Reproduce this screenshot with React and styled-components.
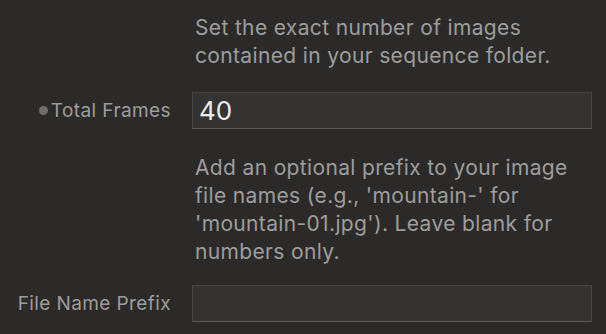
import React from "react";
import styled, { createGlobalStyle } from "styled-components";

const Global = createGlobalStyle`
  html, body { margin: 0; padding: 0; background: #2b2a29; }
  body { font-family: Inter, "Noto Sans", sans-serif; -webkit-font-smoothing: antialiased; }
`;

const Form = styled.div`
  display: grid;
  grid-template-columns: 171px 400px;
  column-gap: 21px;
  padding-top: 14px;
`;

const Hint = styled.p`
  grid-column: 2;
  box-sizing: border-box;
  width: 392px;
  margin: ${(p) => p.$before}px 0 ${(p) => p.$after}px 0;
  padding-left: 3px;
  font-size: 21px;
  letter-spacing: 0.35px;
  line-height: 28px;
  color: #9e9d9b;
`;

const Label = styled.label`
  grid-column: 1;
  display: flex;
  align-items: center;
  justify-content: flex-end;
  gap: 3px;
  font-size: 19px;
  letter-spacing: 0.4px;
  color: #9e9d9b;
`;

const Dot = styled.span`
  width: 9px;
  height: 9px;
  border-radius: 50%;
  background: #6e6d6b;
`;

const Field = styled.input`
  grid-column: 2;
  box-sizing: border-box;
  height: 37px;
  width: 400px;
  margin: 0;
  padding: 0 6px;
  background: #353432;
  border: 1px solid #474644;
  border-bottom-color: #5a5957;
  color: #ececea;
  font-family: Inter, "Noto Sans", sans-serif;
  font-size: 26px;
  outline: none;
`;

export default function App() {
  return (
    <>
      <Global />
      <Form>
        <span />
        <Hint $before={0} $after={22}>
          Set the exact number of images contained in your sequence folder.
        </Hint>
        <Label>
          <Dot />
          Total Frames
        </Label>
        <Field defaultValue="40" />
        <span />
        <Hint $before={25} $after={19}>
          Add an optional prefix to your image file names (e.g., 'mountain-' for
          'mountain-01.jpg'). Leave blank for numbers only.
        </Hint>
        <Label>File Name Prefix</Label>
        <Field defaultValue="" />
      </Form>
    </>
  );
}
